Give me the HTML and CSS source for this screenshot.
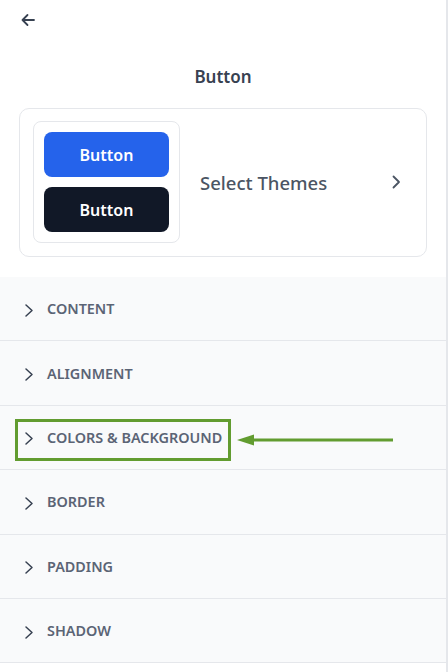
FILE: index.html
```html
<!DOCTYPE html>
<html lang="en">
<head>
  <meta charset="utf-8">
  <title>Button</title>
  <link rel="stylesheet" href="styles.css">
</head>
<body>
<div class="panel">
  <div class="topbar">
    <svg class="back" width="16" height="16" viewBox="0 0 16 16" fill="none" stroke="#374151" stroke-width="1.8" stroke-linecap="round" stroke-linejoin="round">
      <path d="M14 8H2.5M7.5 3L2.5 8l5 5"/>
    </svg>
  </div>

  <header class="title">Button</header>

  <div class="theme-card">
    <div class="preview">
      <div class="btn btn-blue">Button</div>
      <div class="btn btn-dark">Button</div>
    </div>
    <span class="theme-label">Select Themes</span>
    <svg class="theme-chevron" width="10" height="16" viewBox="0 0 10 16" fill="none" stroke="#4b5563" stroke-width="1.8" stroke-linecap="round" stroke-linejoin="round">
      <path d="M2.5 2.5L8 8l-5.5 5.5"/>
    </svg>
  </div>

  <div class="sections">
    <div class="section"><svg class="chev" width="10" height="16" viewBox="0 0 10 16"><path d="M2 3l6 5.5-6 5.5"/></svg>CONTENT</div>
    <div class="section"><svg class="chev" width="10" height="16" viewBox="0 0 10 16"><path d="M2 3l6 5.5-6 5.5"/></svg>ALIGNMENT</div>
    <div class="section highlighted">
      <svg class="chev" width="10" height="16" viewBox="0 0 10 16"><path d="M2 3l6 5.5-6 5.5"/></svg>COLORS &amp; BACKGROUND
      <div class="callout-box"></div>
      <svg class="callout-arrow" width="158" height="14" viewBox="0 0 158 14">
        <path d="M0 7L17 1.5V12.5Z" fill="#629c30"/>
        <rect x="15" y="5.5" width="141" height="3" fill="#629c30"/>
      </svg>
    </div>
    <div class="section"><svg class="chev" width="10" height="16" viewBox="0 0 10 16"><path d="M2 3l6 5.5-6 5.5"/></svg>BORDER</div>
    <div class="section"><svg class="chev" width="10" height="16" viewBox="0 0 10 16"><path d="M2 3l6 5.5-6 5.5"/></svg>PADDING</div>
    <div class="section"><svg class="chev" width="10" height="16" viewBox="0 0 10 16"><path d="M2 3l6 5.5-6 5.5"/></svg>SHADOW</div>
  </div>
</div>
</body>
</html>
```

FILE: styles.css
```css
body {
    margin: 0;
    background-color: #fff;
    font-family: "Noto Sans", "Open Sans", sans-serif;
    color: #374151;
}

.panel {
    width: 446px;
    min-height: 100vh;
    border-right: solid 2px #e5e7eb;
}

.topbar {
    height: 40px;
    padding-left: 20px;
    display: flex;
    align-items: center;
}

.title {
    margin-top: 25px;
    text-align: center;
    font-size: 17px;
    font-weight: 600;
    line-height: 24px;
    color: #374151;
}

.theme-card {
    margin: 19px 19px 0;
    padding: 12px 25px 13px 13px;
    border: solid 1px #e5e7eb;
    border-radius: 10px;

    display: flex;
    align-items: center;
}

.preview {
    padding: 10px;
    border: solid 1px #e5e7eb;
    border-radius: 8px;

    display: flex;
    flex-direction: column;
    gap: 10px;
}

.btn {
    width: 125px;
    height: 45px;
    border-radius: 8px;
    color: #fff;
    font-size: 16px;
    font-weight: 600;

    display: flex;
    justify-content: center;
    align-items: center;
}

.btn-blue {
    background-color: #2563eb;
}

.btn-dark {
    background-color: #111827;
}

.theme-label {
    flex: 1;
    margin-left: 20px;
    font-size: 18.5px;
    font-weight: 500;
    color: #4b5563;
}

.sections {
    margin-top: 20px;
    background-color: #f9fafb;
}

.section {
    position: relative;
    height: 63.4px;
    padding-left: 24px;
    border-bottom: solid 1px #e5e7eb;
    font-size: 14.4px;
    font-weight: 600;
    color: #5b6475;

    display: flex;
    align-items: center;
    gap: 13px;
}

.chev {
    margin-top: 2px;
    fill: none;
    stroke: #374151;
    stroke-width: 1.5;
    stroke-linecap: round;
    stroke-linejoin: round;
}

.callout-box {
    position: absolute;
    left: 15px;
    top: 13px;
    width: 210px;
    height: 36px;
    border: solid 3px #629c30;
}

.callout-arrow {
    position: absolute;
    left: 237px;
    top: 27px;
}
```
